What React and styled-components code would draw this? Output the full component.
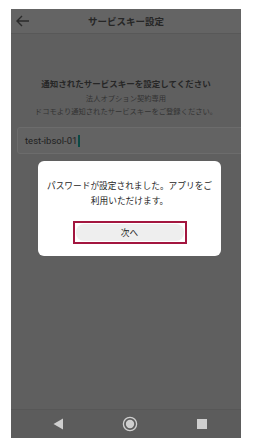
import React from "react";
import styled, { createGlobalStyle } from "styled-components";

const Global = createGlobalStyle`
  html, body { margin: 0; padding: 0; background: #ffffff; }
  body { font-family: "Noto Sans CJK JP", "Noto Sans", sans-serif; }
`;

const Page = styled.div`
  width: 258px;
  height: 444px;
  padding: 9px 17px 6px 11px;
  box-sizing: border-box;
`;

const Screen = styled.div`
  position: relative;
  width: 230px;
  height: 429px;
  background: #5f5f5f;
  display: flex;
  flex-direction: column;
  overflow: hidden;
`;

const Header = styled.div`
  height: 25px;
  flex: none;
  display: grid;
  grid-template-columns: 30px 1fr 30px;
  align-items: center;
  background: #646464;
  border-bottom: 1px solid #585858;
  box-sizing: border-box;
`;

const BackButton = styled.div`
  display: flex;
  align-items: center;
  padding-left: 4px;
`;

const HeaderTitle = styled.div`
  text-align: center;
  font-size: 9.5px;
  font-weight: 700;
  color: #262626;
`;

const Content = styled.div`
  flex: 1;
  display: flex;
  flex-direction: column;
  padding-top: 43px;
`;

const Title = styled.div`
  text-align: center;
  font-size: 8.5px;
  line-height: 12px;
  font-weight: 700;
  color: #262626;
  margin-bottom: 3px;
`;

const Sub = styled.div`
  text-align: center;
  font-size: 7.3px;
  line-height: 13px;
  color: #333333;
`;

const Input = styled.div`
  margin: 9px -4px 0 6px;
  height: 25px;
  border: 1px solid #6c6c6c;
  border-radius: 3px;
  background: #636363;
  display: flex;
  align-items: center;
  padding-left: 7px;
  font-family: "Roboto", "Noto Sans", sans-serif;
  font-size: 9.5px;
  color: #1f1f1f;
`;

const Caret = styled.span`
  display: inline-block;
  width: 2px;
  height: 12px;
  background: #0c4a45;
  margin-left: 1px;
`;

const NavBar = styled.div`
  height: 29px;
  flex: none;
  background: #5c5c5c;
  border-top: 1px solid #575757;
  box-sizing: border-box;
  display: grid;
  grid-template-columns: repeat(3, 72px);
  padding-left: 11px;
  align-items: center;
  justify-items: center;
`;

const Dialog = styled.div`
  position: absolute;
  left: 27px;
  top: 152px;
  width: 183px;
  height: 95px;
  background: #ffffff;
  border-radius: 6px;
  box-sizing: border-box;
  display: flex;
  flex-direction: column;
  align-items: center;
  padding-top: 17px;
`;

const DialogText = styled.div`
  text-align: center;
  font-size: 8.7px;
  line-height: 15px;
  color: #262626;
  width: 170px;
`;

const NextButton = styled.div`
  margin-top: 13px;
  width: 114px;
  height: 23px;
  box-sizing: border-box;
  border: 2px solid #a3163f;
  display: flex;
  align-items: center;
  justify-content: center;
  background: #ffffff;
  padding: 1px;
`;

const NextInner = styled.div`
  width: 100%;
  height: 100%;
  background: #eeeeee;
  border-radius: 8px;
  display: flex;
  align-items: center;
  justify-content: center;
  font-size: 8.7px;
  color: #262626;
`;

export default function App() {
  return (
    <>
      <Global />
      <Page>
        <Screen>
          <Header>
            <BackButton>
              <svg width="15" height="12" viewBox="0 0 15 12">
                <path d="M14 6H2M7 1L2 6l5 5" fill="none" stroke="#2a2a2a" strokeWidth="1.4" />
              </svg>
            </BackButton>
            <HeaderTitle>サービスキー設定</HeaderTitle>
            <div />
          </Header>
          <Content>
            <Title>通知されたサービスキーを設定してください</Title>
            <Sub>法人オプション契約専用</Sub>
            <Sub>ドコモより通知されたサービスキーをご登録ください。</Sub>
            <Input>
              test-ibsol-01<Caret />
            </Input>
          </Content>
          <NavBar>
            <svg width="11" height="12" viewBox="0 0 11 12">
              <path d="M10 0.5V11.5L0.5 6Z" fill="#cfcfcf" />
            </svg>
            <svg width="16" height="16" viewBox="0 0 16 16">
              <circle cx="8" cy="8" r="6.6" fill="none" stroke="#cfcfcf" strokeWidth="1.3" />
              <circle cx="8" cy="8" r="4.2" fill="#cfcfcf" />
            </svg>
            <svg width="10" height="10" viewBox="0 0 10 10">
              <rect x="0" y="0" width="10" height="10" fill="#cfcfcf" />
            </svg>
          </NavBar>
          <Dialog>
            <DialogText>
              パスワードが設定されました。アプリをご
              <br />
              利用いただけます。
            </DialogText>
            <NextButton>
              <NextInner>次へ</NextInner>
            </NextButton>
          </Dialog>
        </Screen>
      </Page>
    </>
  );
}
